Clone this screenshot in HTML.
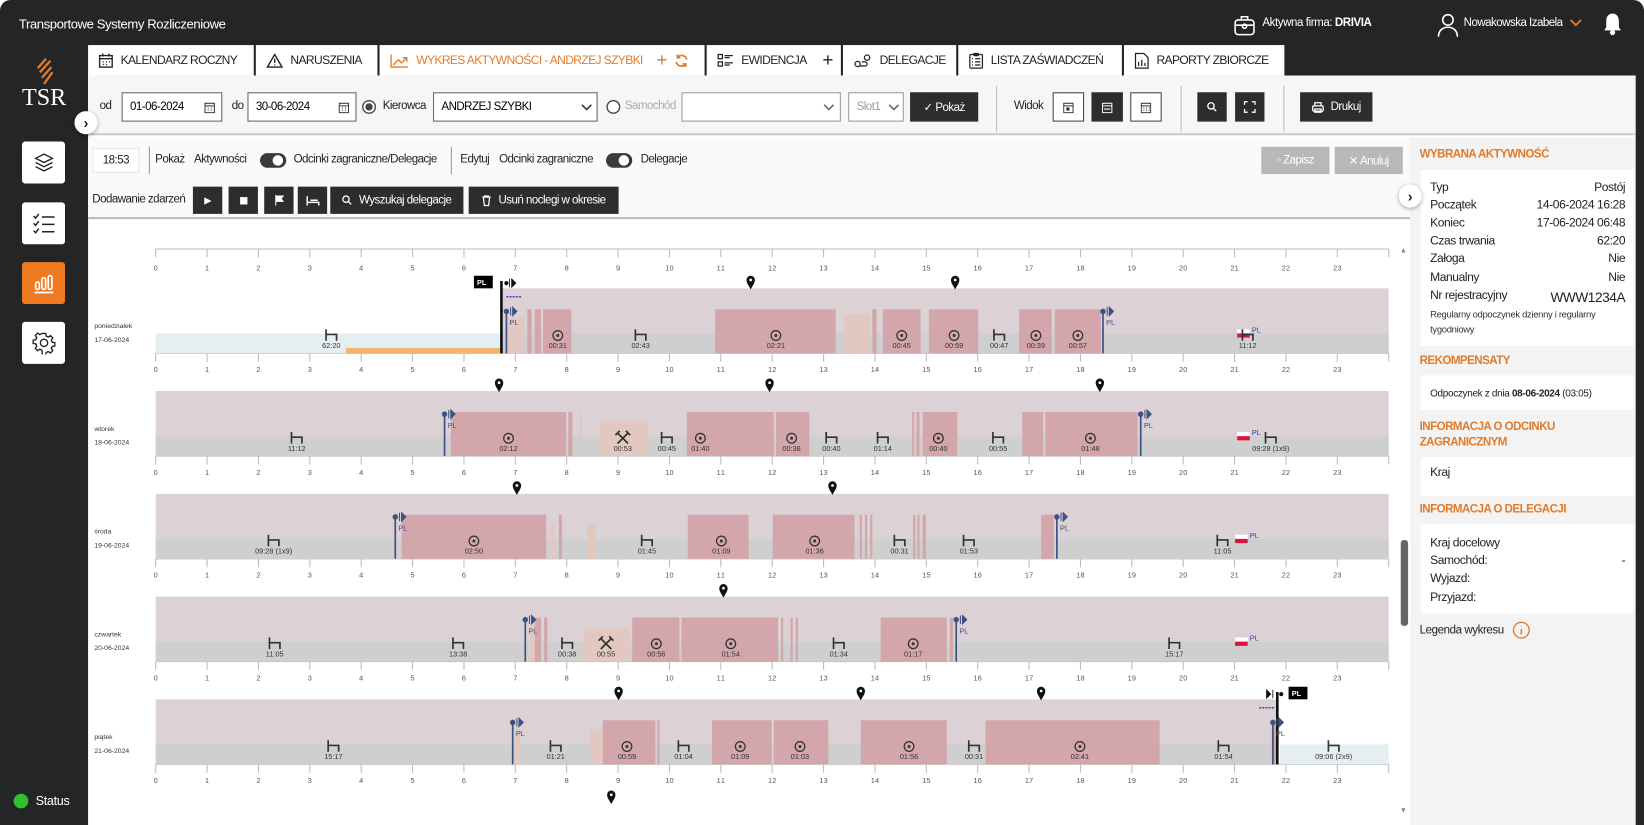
<!DOCTYPE html>
<html><head><meta charset="utf-8">
<style>
*{box-sizing:border-box;margin:0;padding:0}
html,body{width:1644px;height:825px;overflow:hidden;background:#fff;font-family:"Liberation Sans",sans-serif}
#w{position:absolute;left:0;top:0;width:1568px;height:787px;transform:scale(1.04847);transform-origin:0 0;background:#232526;border-radius:10px 10px 0 0;overflow:hidden}
.a{position:absolute}
.t{font-size:11px;color:#222;white-space:nowrap;letter-spacing:-0.5px}
.tab{position:absolute;top:43px;height:29px;background:#fff;font-size:11.5px;color:#222;display:flex;align-items:center;padding-left:10px;gap:7px;white-space:nowrap;letter-spacing:-0.6px;overflow:hidden}
.inp{position:absolute;top:88px;height:28px;background:#fff;border:1px solid #666;font-size:11px;display:flex;align-items:center;padding-left:7px;letter-spacing:-0.5px}
.btn{position:absolute;background:#2b2d2e;color:#fff;font-size:11px;display:flex;align-items:center;justify-content:center;gap:6px;white-space:nowrap;letter-spacing:-0.5px}
.wb{position:absolute;top:88px;width:30px;height:28px;border:1px solid #444;background:#fff}
.side{position:absolute;left:21px;width:41px;height:40px;background:#fff;border-radius:3px;display:flex;align-items:center;justify-content:center}
.h{position:absolute;left:1354px;font-size:11px;font-weight:bold;color:#e07b2b;letter-spacing:-0.5px}
.card{position:absolute;left:1355px;width:203px;background:#fff}
.r{position:absolute;left:1364px;width:186px;font-size:11.5px;color:#222;display:flex;justify-content:space-between;letter-spacing:-0.4px}
.circ{position:absolute;width:22px;height:22px;border-radius:50%;background:#fff;box-shadow:0 1px 4px rgba(0,0,0,.35);font-size:14px;font-weight:bold;display:flex;align-items:center;justify-content:center;color:#222}
</style></head><body>
<div id="w">
<div class="a" style="left:18px;top:16px;font-size:12.5px;color:#fff;letter-spacing:-0.4px">Transportowe Systemy Rozliczeniowe</div>
<svg class="a" style="left:1176px;top:13px" width="22" height="22" viewBox="0 0 22 22" fill="none" stroke="#fff" stroke-width="1.5"><rect x="2" y="6" width="18" height="14" rx="3"/><path d="M8 6V3h6v3M2 11h18"/><circle cx="11" cy="12" r="2"/></svg>
<div class="a" style="left:1204px;top:16px;font-size:11px;color:#fff;letter-spacing:-0.4px">Aktywna firma: <b>DRIVIA</b></div>
<svg class="a" style="left:1370px;top:12px" width="22" height="24" viewBox="0 0 22 24" fill="none" stroke="#fff" stroke-width="1.5"><circle cx="11" cy="7" r="5"/><path d="M2 23c0-6 4-9 9-9s9 3 9 9"/></svg>
<div class="a" style="left:1396px;top:16px;font-size:11px;color:#fff;letter-spacing:-0.5px">Nowakowska Izabela</div>
<svg class="a" style="left:1497px;top:18px" width="12" height="8" viewBox="0 0 12 8"><path d="M1 1l5 5 5-5" stroke="#e07b2b" stroke-width="1.8" fill="none"/></svg>
<svg class="a" style="left:1530px;top:12px" width="16" height="22" viewBox="0 0 16 22"><path d="M8 1c-4 0-6 3-6 7v6l-2 3h16l-2-3V8c0-4-2-7-6-7z" fill="#fff"/><circle cx="8" cy="19" r="2.5" fill="#fff"/></svg>

<div class="tab" style="left:84px;width:158px"><svg width="14" height="14" viewBox="0 0 14 14" fill="none" stroke="#222" stroke-width="1.3"><rect x="1" y="2" width="12" height="11"/><path d="M1 5h12M4 0v3M10 0v3M4 8h1M7 8h1M10 8h1M4 10.5h1M7 10.5h1"/></svg>KALENDARZ ROCZNY</div>
<div class="tab" style="left:244px;width:116px"><svg width="16" height="14" viewBox="0 0 16 14" fill="none" stroke="#222" stroke-width="1.3"><path d="M8 1L15 13H1z M8 5v4 M8 10.5v1"/></svg>NARUSZENIA</div>
<div class="tab" style="left:362px;width:310px;color:#e07b2b"><svg width="18" height="14" viewBox="0 0 18 14" fill="none" stroke="#e07b2b" stroke-width="1.3"><path d="M1 1v12h16M3 11l5-5 3 3 5-5M12 4h4v4"/></svg>WYKRES AKTYWNOŚCI - ANDRZEJ SZYBKI<span style="font-size:18px;margin-left:6px">+</span><svg width="14" height="14" viewBox="0 0 14 14" fill="none" stroke="#e07b2b" stroke-width="1.6"><path d="M12 6A5 5 0 0 0 3 4M2 8a5 5 0 0 0 9 2M3 1v3h3M11 13v-3H8"/></svg></div>
<div class="tab" style="left:674px;width:128px"><svg width="16" height="14" viewBox="0 0 16 14" fill="none" stroke="#222" stroke-width="1.2"><rect x="1" y="1" width="4" height="4"/><rect x="1" y="8" width="4" height="4"/><path d="M7 2h8M7 4h5M7 9h8M7 11h5"/></svg>EWIDENCJA<span style="font-size:18px;margin-left:8px">+</span></div>
<div class="tab" style="left:804px;width:108px"><svg width="18" height="14" viewBox="0 0 18 14" fill="none" stroke="#222" stroke-width="1.2"><circle cx="4" cy="10" r="2.5"/><circle cx="13" cy="4" r="2.5"/><path d="M6 12h5a2 2 0 0 0 0-4H8"/></svg>DELEGACJE</div>
<div class="tab" style="left:914px;width:156px"><svg width="14" height="16" viewBox="0 0 14 16" fill="none" stroke="#222" stroke-width="1.2"><rect x="1" y="2" width="12" height="13" rx="1"/><path d="M5 1h4v2H5zM3 6h1M6 6h5M3 9h1M6 9h5M3 12h1M6 12h5"/></svg>LISTA ZAŚWIADCZEŃ</div>
<div class="tab" style="left:1072px;width:153px"><svg width="14" height="16" viewBox="0 0 14 16" fill="none" stroke="#222" stroke-width="1.2"><path d="M1 1h8l4 4v10H1z"/><path d="M4 13V9M7 13V7M10 13v-3"/></svg>RAPORTY ZBIORCZE</div>

<div class="a" style="left:84px;top:72px;width:1476px;height:715px;background:#fff"></div>
<div class="a" style="left:84px;top:72px;width:1476px;height:57px;background:#f6f6f6;border-bottom:2px solid #ccc"></div>
<div class="a" style="left:84px;top:131px;width:1261px;height:78px;background:#fafafa;border-bottom:2px solid #bbb"></div>

<div class="a t" style="left:95px;top:95px">od</div>
<div class="inp" style="left:116px;width:96px">01-06-2024<svg class="a" style="left:78px;top:8px" width="10" height="11" viewBox="0 0 10 11" fill="none" stroke="#333"><rect x=".5" y="1.5" width="9" height="9"/><path d="M.5 4h9M3 6h1M6 6h1M3 8h1M6 8h1"/></svg></div>
<div class="a t" style="left:221px;top:95px">do</div>
<div class="inp" style="left:236px;width:104px">30-06-2024<svg class="a" style="left:86px;top:8px" width="10" height="11" viewBox="0 0 10 11" fill="none" stroke="#333"><rect x=".5" y="1.5" width="9" height="9"/><path d="M.5 4h9M3 6h1M6 6h1M3 8h1M6 8h1"/></svg></div>
<svg class="a" style="left:345px;top:95px" width="14" height="14"><circle cx="7" cy="7" r="6" fill="#fff" stroke="#444" stroke-width="1.3"/><circle cx="7" cy="7" r="3.5" fill="#444"/></svg>
<div class="a t" style="left:365px;top:95px">Kierowca</div>
<div class="inp" style="left:413px;width:157px">ANDRZEJ SZYBKI<svg class="a" style="left:140px;top:10px" width="11" height="7"><path d="M1 1l4.5 4.5L10 1" stroke="#333" stroke-width="1.5" fill="none"/></svg></div>
<svg class="a" style="left:578px;top:95px" width="14" height="14"><circle cx="7" cy="7" r="6" fill="#fff" stroke="#444" stroke-width="1.3"/></svg>
<div class="a t" style="left:596px;top:95px;color:#aaa">Samochód</div>
<div class="inp" style="left:650px;width:152px;border-color:#999"><svg class="a" style="left:134px;top:10px" width="11" height="7"><path d="M1 1l4.5 4.5L10 1" stroke="#666" stroke-width="1.5" fill="none"/></svg></div>
<div class="inp" style="left:809px;width:53px;border-color:#999;color:#999">Slot1<svg class="a" style="left:37px;top:10px" width="11" height="7"><path d="M1 1l4.5 4.5L10 1" stroke="#666" stroke-width="1.5" fill="none"/></svg></div>
<div class="btn" style="left:868px;top:88px;width:65px;height:28px">✓ Pokaż</div>
<div class="a" style="left:950px;top:82px;width:1px;height:44px;background:#bbb"></div>
<div class="a t" style="left:967px;top:95px">Widok</div>
<div class="wb" style="left:1004px"></div><div class="btn" style="left:1041px;top:88px;width:30px;height:28px"></div><div class="wb" style="left:1078px"></div>
<svg class="a" style="left:1014px;top:97px" width="10" height="11" fill="none" stroke="#333"><rect x=".5" y="1.5" width="9" height="9"/><path d="M.5 4h9"/><rect x="3.5" y="6" width="2" height="2" fill="#333"/></svg>
<svg class="a" style="left:1051px;top:97px" width="10" height="11" fill="none" stroke="#fff"><rect x=".5" y="1.5" width="9" height="9"/><path d="M.5 4h9M2 7h6"/></svg>
<svg class="a" style="left:1088px;top:97px" width="10" height="11" fill="none" stroke="#333"><rect x=".5" y="1.5" width="9" height="9"/><path d="M.5 4h9M2.5 6h1M5 6h1M7.5 6h1M2.5 8h1M5 8h1M7.5 8h1"/></svg>
<div class="a" style="left:1126px;top:82px;width:1px;height:44px;background:#bbb"></div>
<div class="btn" style="left:1142px;top:88px;width:28px;height:28px"><svg width="10" height="10" fill="none" stroke="#fff" stroke-width="1.3"><circle cx="4" cy="4" r="3"/><path d="M6 6l3 3"/></svg></div>
<div class="btn" style="left:1178px;top:88px;width:28px;height:28px"><svg width="12" height="12" fill="none" stroke="#fff" stroke-width="1.2"><path d="M1 4V1h3M8 1h3v3M11 8v3H8M4 11H1V8"/></svg></div>
<div class="a" style="left:1224px;top:82px;width:1px;height:44px;background:#bbb"></div>
<div class="btn" style="left:1240px;top:88px;width:69px;height:28px"><svg width="12" height="11" fill="none" stroke="#fff" stroke-width="1.2"><rect x="1" y="4" width="10" height="5" rx="1"/><path d="M3 4V1h6v3M3 7h6v3H3z"/></svg>Drukuj</div>

<div class="a t" style="left:88px;top:141px;width:45px;height:24px;border:1px solid #e4e4e4;background:#fff;display:flex;align-items:center;justify-content:center">18:53</div>
<div class="a" style="left:142px;top:140px;width:1px;height:26px;background:#999"></div>
<div class="a t" style="left:148px;top:146px">Pokaż</div>
<div class="a t" style="left:185px;top:146px">Aktywności</div>
<div class="a" style="left:248px;top:146px;width:25px;height:14px;border-radius:7px;background:#3a3a3a"></div><div class="a" style="left:260px;top:148px;width:10px;height:10px;border-radius:50%;background:#fff"></div>
<div class="a t" style="left:280px;top:146px">Odcinki zagraniczne/Delegacje</div>
<div class="a" style="left:430px;top:140px;width:1px;height:26px;background:#999"></div>
<div class="a t" style="left:439px;top:146px">Edytuj</div>
<div class="a t" style="left:476px;top:146px">Odcinki zagraniczne</div>
<div class="a" style="left:578px;top:146px;width:25px;height:14px;border-radius:7px;background:#3a3a3a"></div><div class="a" style="left:590px;top:148px;width:10px;height:10px;border-radius:50%;background:#fff"></div>
<div class="a t" style="left:611px;top:146px">Delegacje</div>
<div class="btn" style="left:1203px;top:140px;width:65px;height:26px;background:#b8b8b8">▫ Zapisz</div>
<div class="btn" style="left:1273px;top:140px;width:65px;height:26px;background:#b8b8b8">✕ Anuluj</div>
<div class="a t" style="left:88px;top:184px">Dodawanie zdarzeń</div>
<div class="btn" style="left:184px;top:178px;width:28px;height:26px;font-size:9px">▶</div>
<div class="btn" style="left:218px;top:178px;width:28px;height:26px"><div style="width:7px;height:7px;background:#fff"></div></div>
<div class="btn" style="left:252px;top:178px;width:28px;height:26px"><svg width="9" height="10"><path d="M1 0v10M1 1h7l-2 2.5 2 2.5H1" fill="#fff" stroke="#fff"/></svg></div>
<div class="btn" style="left:284px;top:178px;width:28px;height:26px"><svg width="13" height="9" fill="none" stroke="#fff" stroke-width="1.4"><path d="M1 0v9M1 6h11v3M4 4h7"/></svg></div>
<div class="btn" style="left:315px;top:178px;width:127px;height:26px"><svg width="10" height="10" fill="none" stroke="#fff" stroke-width="1.3"><circle cx="4" cy="4" r="3"/><path d="M6 6l3 3"/></svg>Wyszukaj delegacje</div>
<div class="btn" style="left:447px;top:178px;width:143px;height:26px"><svg width="10" height="11" fill="none" stroke="#fff" stroke-width="1.2"><path d="M1 2h8M3 2V1h4v1M2 2l1 8h4l1-8"/></svg>Usuń noclegi w okresie</div>

<div class="a" style="left:1345px;top:131px;width:215px;height:656px;background:#f3f3f3"></div>
<div class="h" style="top:141px">WYBRANA AKTYWNOŚĆ</div>
<div class="card" style="top:162px;height:168px"></div>
<div class="r" style="top:173px"><span>Typ</span><span>Postój</span></div>
<div class="r" style="top:190px"><span>Początek</span><span>14-06-2024 16:28</span></div>
<div class="r" style="top:207px"><span>Koniec</span><span>17-06-2024 06:48</span></div>
<div class="r" style="top:224px"><span>Czas trwania</span><span>62:20</span></div>
<div class="r" style="top:241px"><span>Załoga</span><span>Nie</span></div>
<div class="r" style="top:259px"><span>Manualny</span><span>Nie</span></div>
<div class="r" style="top:276px"><span>Nr rejestracyjny</span><span style="font-size:13px">WWW1234A</span></div>
<div class="a" style="left:1364px;top:293px;width:190px;font-size:9px;line-height:14px;color:#333;letter-spacing:-0.3px">Regularny odpoczynek dzienny i regularny tygodniowy</div>
<div class="h" style="top:338px">REKOMPENSATY</div>
<div class="card" style="top:358px;height:33px"></div>
<div class="a" style="left:1364px;top:370px;font-size:9.5px;color:#222;letter-spacing:-0.3px">Odpoczynek z dnia <b>08-06-2024</b> (03:05)</div>
<div class="h" style="top:400px;line-height:15px">INFORMACJA O ODCINKU<br>ZAGRANICZNYM</div>
<div class="card" style="top:436px;height:37px"></div>
<div class="r" style="top:445px"><span>Kraj</span></div>
<div class="h" style="top:480px">INFORMACJA O DELEGACJI</div>
<div class="card" style="top:500px;height:85px"></div>
<div class="r" style="top:512px"><span>Kraj docelowy</span></div>
<div class="r" style="top:529px"><span>Samochód:</span><span>-</span></div>
<div class="r" style="top:546px"><span>Wyjazd:</span></div>
<div class="r" style="top:564px"><span>Przyjazd:</span></div>
<div class="a" style="left:1354px;top:595px;font-size:11px;color:#222;letter-spacing:-0.4px">Legenda wykresu</div>
<svg class="a" style="left:1442px;top:592px" width="18" height="18"><circle cx="9" cy="9" r="7.5" fill="none" stroke="#e07b2b" stroke-width="1.3"/><path d="M9 8v5M9 5.5v.5" stroke="#e07b2b" stroke-width="1.5"/></svg>

<div class="a" style="left:1335px;top:236px;font-size:7px;color:#888">▲</div>
<div class="a" style="left:1336px;top:515px;width:7px;height:82px;border-radius:3px;background:#666"></div>
<div class="a" style="left:1335px;top:770px;font-size:7px;color:#888">▼</div>

<svg class="a" style="left:32px;top:55px" width="22" height="26" viewBox="0 0 22 26"><path d="M12 1L4 10M16 3L6 14M17 9L8 19M18 14L10 25" stroke="#e07b2b" stroke-width="2.2"/></svg>
<div class="a" style="left:21px;top:80px;font-family:'Liberation Serif',serif;font-size:23px;color:#fff">TSR</div>
<div class="side" style="top:135px"><svg width="20" height="20" viewBox="0 0 20 20" fill="none" stroke="#222" stroke-width="1.3"><path d="M10 2l8 4-8 4-8-4z M2 10l8 4 8-4 M2 14l8 4 8-4"/></svg></div>
<div class="side" style="top:193px"><svg width="22" height="20" viewBox="0 0 22 20" fill="none" stroke="#222" stroke-width="1.4"><path d="M1 3l2 2 3-4M1 10l2 2 3-4M1 17l2 2 3-4M9 4h12M9 11h12M9 18h12"/></svg></div>
<div class="side" style="top:250px;background:#ef7a22"><svg width="22" height="20" viewBox="0 0 22 20" fill="none" stroke="#fff" stroke-width="1.6"><rect x="3" y="9" width="3.5" height="7" rx="1.5"/><rect x="9" y="5" width="3.5" height="11" rx="1.5"/><rect x="15" y="3" width="3.5" height="13" rx="1.5"/><path d="M2 19h18"/></svg></div>
<div class="side" style="top:307px"><svg width="22" height="22" viewBox="0 0 22 22" fill="none" stroke="#222" stroke-width="1.3"><circle cx="11" cy="11" r="3.5"/><path d="M9.5 2h3l.5 2.5 2 1 2.2-1.4 2.1 2.1-1.4 2.2 1 2 2.5.5v3l-2.5.5-1 2 1.4 2.2-2.1 2.1-2.2-1.4-2 1-.5 2.5h-3L9 18l-2-1-2.2 1.4-2.1-2.1L4.1 14l-1-2L.6 11.5v-3L3.1 8l1-2-1.4-2.2 2.1-2.1L7 3.1l2-1z"/></svg></div>
<div class="a" style="left:13px;top:757px;width:14px;height:14px;border-radius:50%;background:#2fbf2f"></div>
<div class="a" style="left:34px;top:757px;font-size:12px;color:#fff;letter-spacing:-0.3px">Status</div>

<svg class="a" style="left:0;top:0" width="1568" height="787" viewBox="0 0 1568 787" font-family="Liberation Sans, sans-serif">
<defs>
<g id="dr"><circle r="4.6" fill="none" stroke="#333" stroke-width="1.2"/><circle r="1.4" fill="#333"/></g>
<path id="rs" d="M-5 -6V5M-5 -1H5V5" fill="none" stroke="#333" stroke-width="1.6"/>
<path id="tl" d="M-5 -5L5 5M5 -5L-5 5M-7 -3L-3 -7M3 -7L7 -3" fill="none" stroke="#333" stroke-width="1.7"/>
<g id="pin"><path d="M0 6C-2 2-4 0-4-3A4 4 0 1 1 4-3C4 0 2 2 0 6Z" fill="#111"/><circle cy="-3" r="1.3" fill="#fff"/></g>
<g id="bm"><path d="M0 20V62" stroke="#3b5283" stroke-width="1.6"/><circle cy="22" r="2.6" fill="#3b5283"/><path d="M4 18v8M6 18l4 4-4 4z" stroke="#3b5283" fill="#3b5283" stroke-width="1"/><text x="3" y="35" font-size="7" fill="#3b5283">PL</text></g>
<g id="fl"><rect x="0" y="-4" width="12" height="4" fill="#fff"/><rect x="0" y="0" width="12" height="4" fill="#dc143c"/><text x="14" y="-1" font-size="7" fill="#3344aa">PL</text></g>
<path id="tk" d="M148.5 0H1324.5M148.5 0v8M197.5 0v8M246.5 0v8M295.5 0v8M344.5 0v8M393.5 0v8M442.5 0v8M491.5 0v8M540.5 0v8M589.5 0v8M638.5 0v8M687.5 0v8M736.5 0v8M785.5 0v8M834.5 0v8M883.5 0v8M932.5 0v8M981.5 0v8M1030.5 0v8M1079.5 0v8M1128.5 0v8M1177.5 0v8M1226.5 0v8M1275.5 0v8M1324.5 0v8" stroke="#bbb" stroke-width="1" fill="none"/>
</defs>
<g font-size="7" fill="#555">
<use href="#tk" y="237.5"/><use href="#tk" y="337"/><use href="#tk" y="435"/><use href="#tk" y="533"/><use href="#tk" y="631"/><use href="#tk" y="729"/>
<text y="258" x="146.5 195.5 244.5 293.5 342.5 391.5 440.5 489.5 538.5 587.5 634.5 638.5 683.5 687.5 732.5 736.5 781.5 785.5 830.5 834.5 879.5 883.5 928.5 932.5 977.5 981.5 1026.5 1030.5 1075.5 1079.5 1124.5 1128.5 1173.5 1177.5 1222.5 1226.5 1271.5 1275.5">01234567891011121314151617181920212223</text>
<text y="355" x="146.5 195.5 244.5 293.5 342.5 391.5 440.5 489.5 538.5 587.5 634.5 638.5 683.5 687.5 732.5 736.5 781.5 785.5 830.5 834.5 879.5 883.5 928.5 932.5 977.5 981.5 1026.5 1030.5 1075.5 1079.5 1124.5 1128.5 1173.5 1177.5 1222.5 1226.5 1271.5 1275.5">01234567891011121314151617181920212223</text>
<text y="453" x="146.5 195.5 244.5 293.5 342.5 391.5 440.5 489.5 538.5 587.5 634.5 638.5 683.5 687.5 732.5 736.5 781.5 785.5 830.5 834.5 879.5 883.5 928.5 932.5 977.5 981.5 1026.5 1030.5 1075.5 1079.5 1124.5 1128.5 1173.5 1177.5 1222.5 1226.5 1271.5 1275.5">01234567891011121314151617181920212223</text>
<text y="551" x="146.5 195.5 244.5 293.5 342.5 391.5 440.5 489.5 538.5 587.5 634.5 638.5 683.5 687.5 732.5 736.5 781.5 785.5 830.5 834.5 879.5 883.5 928.5 932.5 977.5 981.5 1026.5 1030.5 1075.5 1079.5 1124.5 1128.5 1173.5 1177.5 1222.5 1226.5 1271.5 1275.5">01234567891011121314151617181920212223</text>
<text y="649" x="146.5 195.5 244.5 293.5 342.5 391.5 440.5 489.5 538.5 587.5 634.5 638.5 683.5 687.5 732.5 736.5 781.5 785.5 830.5 834.5 879.5 883.5 928.5 932.5 977.5 981.5 1026.5 1030.5 1075.5 1079.5 1124.5 1128.5 1173.5 1177.5 1222.5 1226.5 1271.5 1275.5">01234567891011121314151617181920212223</text>
<text y="747" x="146.5 195.5 244.5 293.5 342.5 391.5 440.5 489.5 538.5 587.5 634.5 638.5 683.5 687.5 732.5 736.5 781.5 785.5 830.5 834.5 879.5 883.5 928.5 932.5 977.5 981.5 1026.5 1030.5 1075.5 1079.5 1124.5 1128.5 1173.5 1177.5 1222.5 1226.5 1271.5 1275.5">01234567891011121314151617181920212223</text>
</g>
<g font-size="6.5" fill="#333">
<text x="90" y="313">poniedziałek</text><text x="90" y="326">17-06-2024</text>
<text x="90" y="411">wtorek</text><text x="90" y="424">18-06-2024</text>
<text x="90" y="509">środa</text><text x="90" y="522">19-06-2024</text>
<text x="90" y="607">czwartek</text><text x="90" y="620">20-06-2024</text>
<text x="90" y="705">piątek</text><text x="90" y="718">21-06-2024</text>
</g>

<g transform="translate(0,275)">
<rect x="478" y="0" width="846.5" height="62" fill="#dcd1d4"/>
<rect x="478" y="43" width="846.5" height="19" fill="#cfcfcf"/>
<rect x="148.5" y="43" width="329.5" height="19" fill="#e5eef1"/>
<rect x="330" y="57" width="148" height="5" fill="#f1b56a"/>
<g fill="#e3c8c1"><rect x="483" y="28" width="17" height="34"/><rect x="805" y="25" width="25" height="37"/></g>
<g fill="#d2a6ab"><rect x="503" y="20" width="4" height="42"/><rect x="510" y="20" width="6" height="42"/><rect x="518" y="20" width="27" height="42"/><rect x="682" y="20" width="115" height="42"/><rect x="832" y="20" width="4" height="42"/><rect x="842" y="20" width="36" height="42"/><rect x="886" y="20" width="47" height="42"/><rect x="972" y="20" width="31" height="42"/><rect x="1006" y="20" width="44" height="42"/></g>
<rect x="477" y="-7" width="2.5" height="69" fill="#111"/>
<rect x="452" y="-12" width="18" height="12" fill="#000"/><text x="455" y="-3" font-size="7" fill="#fff" font-weight="bold">PL</text>
<circle cx="483" cy="-5" r="2" fill="#111"/><path d="M486 -9v8M488 -9l4 4-4 4z" stroke="#111" fill="#111" stroke-width=".8"/>
<path d="M483 8h14" stroke="#4444cc" stroke-width="1.4" stroke-dasharray="2 1"/>
<use href="#bm" x="483"/><use href="#bm" x="1052"/>
<use href="#pin" x="716" y="-5"/><use href="#pin" x="911" y="-5"/>
<use href="#fl" x="1180" y="43"/>
<g font-size="7" fill="#333" text-anchor="middle">
<use href="#rs" x="316" y="45"/><text x="316" y="57">62:20</text>
<use href="#dr" x="532" y="45"/><text x="532" y="57">00:31</text>
<use href="#rs" x="611" y="45"/><text x="611" y="57">02:43</text>
<use href="#dr" x="740" y="45"/><text x="740" y="57">02:21</text>
<use href="#dr" x="860" y="45"/><text x="860" y="57">00:45</text>
<use href="#dr" x="910" y="45"/><text x="910" y="57">00:59</text>
<use href="#rs" x="953" y="45"/><text x="953" y="57">00:47</text>
<use href="#dr" x="988" y="45"/><text x="988" y="57">00:39</text>
<use href="#dr" x="1028" y="45"/><text x="1028" y="57">00:57</text>
<use href="#rs" x="1190" y="45"/><text x="1190" y="57">11:12</text>
</g></g>

<g transform="translate(0,373)">
<rect x="148.5" y="0" width="1176" height="62" fill="#dcd1d4"/>
<rect x="148.5" y="43" width="1176" height="19" fill="#cfcfcf"/>
<g fill="#e3c8c1"><rect x="572" y="28" width="46" height="34"/><rect x="553" y="20" width="2" height="42"/></g>
<g fill="#d2a6ab"><rect x="430" y="20" width="110" height="42"/><rect x="542" y="20" width="4" height="42"/><rect x="655" y="20" width="83" height="42"/><rect x="740" y="20" width="32" height="42"/><rect x="870" y="20" width="2" height="42"/><rect x="874" y="20" width="3" height="42"/><rect x="880" y="20" width="33" height="42"/><rect x="975" y="20" width="20" height="42"/><rect x="997" y="20" width="88" height="42"/></g>
<use href="#bm" x="424"/><use href="#bm" x="1088"/>
<use href="#pin" x="476" y="-5"/><use href="#pin" x="734" y="-5"/><use href="#pin" x="1049" y="-5"/>
<use href="#fl" x="1180" y="43"/>
<g font-size="7" fill="#333" text-anchor="middle">
<use href="#rs" x="283" y="45"/><text x="283" y="57">11:12</text>
<use href="#dr" x="485" y="45"/><text x="485" y="57">02:12</text>
<use href="#tl" x="594" y="45"/><text x="594" y="57">00:53</text>
<use href="#rs" x="636" y="45"/><text x="636" y="57">00:45</text>
<use href="#dr" x="668" y="45"/><text x="668" y="57">01:40</text>
<use href="#dr" x="755" y="45"/><text x="755" y="57">00:38</text>
<use href="#rs" x="793" y="45"/><text x="793" y="57">00:40</text>
<use href="#rs" x="842" y="45"/><text x="842" y="57">01:14</text>
<use href="#dr" x="895" y="45"/><text x="895" y="57">00:40</text>
<use href="#rs" x="952" y="45"/><text x="952" y="57">00:55</text>
<use href="#dr" x="1040" y="45"/><text x="1040" y="57">01:48</text>
<use href="#rs" x="1212" y="45"/><text x="1212" y="57">09:28 (1x9)</text>
</g></g>

<g transform="translate(0,471)">
<rect x="148.5" y="0" width="1176" height="62" fill="#dcd1d4"/>
<rect x="148.5" y="43" width="1176" height="19" fill="#cfcfcf"/>
<g fill="#e3c8c1"><rect x="525" y="28" width="4" height="34"/><rect x="560" y="30" width="8" height="32"/><rect x="995" y="28" width="8" height="34"/></g>
<g fill="#d2a6ab"><rect x="383" y="20" width="138" height="42"/><rect x="533" y="20" width="3" height="42"/><rect x="656" y="20" width="58" height="42"/><rect x="737" y="20" width="78" height="42"/><rect x="820" y="20" width="2" height="42"/><rect x="825" y="20" width="2" height="42"/><rect x="830" y="20" width="2" height="42"/><rect x="871" y="20" width="2" height="42"/><rect x="875" y="20" width="2" height="42"/><rect x="880" y="20" width="3" height="42"/><rect x="993" y="20" width="12" height="42"/></g>
<use href="#bm" x="377"/><use href="#bm" x="1008"/>
<use href="#pin" x="493" y="-5"/><use href="#pin" x="794" y="-5"/>
<use href="#fl" x="1178" y="43"/>
<g font-size="7" fill="#333" text-anchor="middle">
<use href="#rs" x="261" y="45"/><text x="261" y="57">09:28 (1x9)</text>
<use href="#dr" x="452" y="45"/><text x="452" y="57">02:50</text>
<use href="#rs" x="617" y="45"/><text x="617" y="57">01:45</text>
<use href="#dr" x="688" y="45"/><text x="688" y="57">01:09</text>
<use href="#dr" x="777" y="45"/><text x="777" y="57">01:36</text>
<use href="#rs" x="858" y="45"/><text x="858" y="57">00:31</text>
<use href="#rs" x="924" y="45"/><text x="924" y="57">01:53</text>
<use href="#rs" x="1166" y="45"/><text x="1166" y="57">11:05</text>
</g></g>

<g transform="translate(0,569)">
<rect x="148.5" y="0" width="1176" height="62" fill="#dcd1d4"/>
<rect x="148.5" y="43" width="1176" height="19" fill="#cfcfcf"/>
<g fill="#e3c8c1"><rect x="557" y="30" width="43" height="32"/><rect x="505" y="28" width="5" height="34"/></g>
<g fill="#d2a6ab"><rect x="510" y="20" width="6" height="42"/><rect x="519" y="20" width="3" height="42"/><rect x="603" y="20" width="45" height="42"/><rect x="650" y="20" width="92" height="42"/><rect x="745" y="20" width="2" height="42"/><rect x="754" y="20" width="2" height="42"/><rect x="759" y="20" width="2" height="42"/><rect x="840" y="20" width="63" height="42"/><rect x="906" y="20" width="3" height="42"/></g>
<use href="#bm" x="501"/><use href="#bm" x="912"/>
<use href="#pin" x="690" y="-5"/>
<use href="#fl" x="1178" y="43"/>
<g font-size="7" fill="#333" text-anchor="middle">
<use href="#rs" x="262" y="45"/><text x="262" y="57">11:05</text>
<use href="#rs" x="437" y="45"/><text x="437" y="57">13:38</text>
<use href="#rs" x="541" y="45"/><text x="541" y="57">00:38</text>
<use href="#tl" x="578" y="45"/><text x="578" y="57">00:55</text>
<use href="#dr" x="626" y="45"/><text x="626" y="57">00:56</text>
<use href="#dr" x="697" y="45"/><text x="697" y="57">01:54</text>
<use href="#rs" x="800" y="45"/><text x="800" y="57">01:34</text>
<use href="#dr" x="871" y="45"/><text x="871" y="57">01:17</text>
<use href="#rs" x="1120" y="45"/><text x="1120" y="57">15:17</text>
</g></g>

<g transform="translate(0,667)">
<rect x="148.5" y="0" width="1070" height="62" fill="#dcd1d4"/>
<rect x="148.5" y="43" width="1070" height="19" fill="#cfcfcf"/>
<rect x="1221" y="43" width="103.5" height="19" fill="#e5eef1"/>
<g fill="#e3c8c1"><rect x="563" y="30" width="12" height="32"/><rect x="491" y="28" width="5" height="34"/></g>
<g fill="#d2a6ab"><rect x="575" y="20" width="50" height="42"/><rect x="627" y="20" width="2" height="42"/><rect x="679" y="20" width="57" height="42"/><rect x="738" y="20" width="52" height="42"/><rect x="821" y="20" width="82" height="42"/><rect x="940" y="20" width="166" height="42"/><rect x="1213" y="20" width="4" height="42"/></g>
<rect x="1217" y="-7" width="2.5" height="69" fill="#111"/>
<rect x="1229" y="-12" width="18" height="12" fill="#000"/><text x="1232" y="-3" font-size="7" fill="#fff" font-weight="bold">PL</text>
<path d="M1208 -9l4 4-4 4zM1214 -9v8" stroke="#111" fill="#111" stroke-width=".8"/><circle cx="1222" cy="-5" r="2" fill="#111"/>
<path d="M1201 8h14" stroke="#4444cc" stroke-width="1.4" stroke-dasharray="2 1"/>
<use href="#bm" x="489"/><use href="#bm" x="1214"/>
<use href="#pin" x="590" y="-5"/><use href="#pin" x="821" y="-5"/><use href="#pin" x="993" y="-5"/><use href="#pin" x="583" y="94"/>
<g font-size="7" fill="#333" text-anchor="middle">
<use href="#rs" x="318" y="45"/><text x="318" y="57">15:17</text>
<use href="#rs" x="530" y="45"/><text x="530" y="57">01:21</text>
<use href="#dr" x="598" y="45"/><text x="598" y="57">00:59</text>
<use href="#rs" x="652" y="45"/><text x="652" y="57">01:04</text>
<use href="#dr" x="706" y="45"/><text x="706" y="57">01:09</text>
<use href="#dr" x="763" y="45"/><text x="763" y="57">01:03</text>
<use href="#dr" x="867" y="45"/><text x="867" y="57">01:56</text>
<use href="#rs" x="929" y="45"/><text x="929" y="57">00:31</text>
<use href="#dr" x="1030" y="45"/><text x="1030" y="57">02:41</text>
<use href="#rs" x="1167" y="45"/><text x="1167" y="57">01:54</text>
<use href="#rs" x="1272" y="45"/><text x="1272" y="57">09:06 (2x9)</text>
</g></g>
</svg>

<div class="circ" style="left:71px;top:106px">›</div>
<div class="circ" style="left:1334px;top:176px">›</div>
</div>
</body></html>
